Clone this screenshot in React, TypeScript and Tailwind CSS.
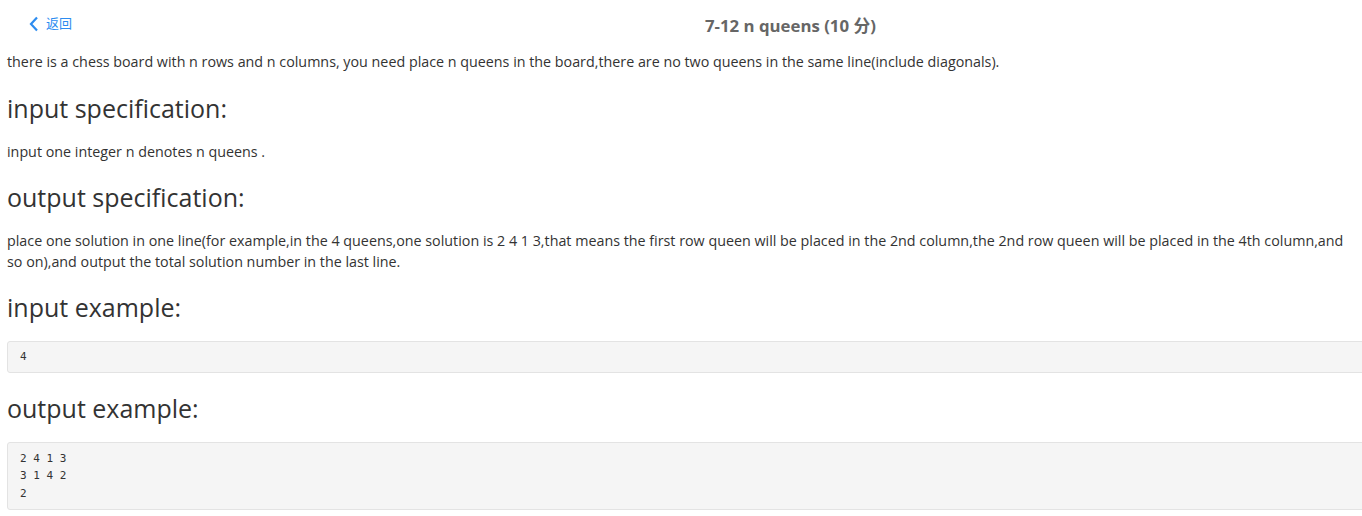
import React from 'react';

const App: React.FC = () => {
  const font = { fontFamily: '"Segoe UI", "Open Sans", "Noto Sans CJK SC", sans-serif' };
  const mono = { fontFamily: 'Consolas, "DejaVu Sans Mono", monospace' };
  return (
    <div className="w-[1362px] h-[516px] overflow-hidden bg-white text-[#333]" style={font}>
      <div className="flex items-center h-[48px] relative">
        <a className="flex items-center gap-[7px] ml-[29px] text-[#2d8cf0] text-[13px]">
          <svg width="10" height="16" viewBox="0 0 10 16" fill="none">
            <path d="M8 1.5L2 8l6 6.5" stroke="#2d8cf0" strokeWidth="2.2" />
          </svg>
          <span>返回</span>
        </a>
        <div className="absolute left-[705px] top-[13px] text-[16.8px] font-bold text-[#666]">7-12 n queens (10 分)</div>
      </div>
      <div className="w-[1580px] px-[7px]">
        <p className="text-[14.3px] leading-[20px] mt-[4px]">
          there is a chess board with n rows and n columns, you need place n queens in the board,there are no two queens in the same line(include diagonals).
        </p>
        <h3 className="text-[25px] leading-[34px] mt-[19px] mb-[17px]">input specification:</h3>
        <p className="text-[14.3px] leading-[20px]">input one integer n denotes n queens .</p>
        <h3 className="text-[25px] leading-[34px] mt-[18px] mb-[16px]">output specification:</h3>
        <p className="text-[14.3px] leading-[21px] w-[1352px]">
          place one solution in one line(for example,in the 4 queens,one solution is 2 4 1 3,that means the first row queen will be placed in the 2nd column,the 2nd row queen will be placed in the 4th column,and so on),and output the total solution number in the last line.
        </p>
        <h3 className="text-[25px] leading-[34px] mt-[18px] mb-[17px]">input example:</h3>
        <pre className="bg-[#f5f5f5] border border-[#e3e3e3] rounded-[3px] px-[12px] py-[6px] text-[11px] leading-[17.5px] text-[#333]" style={mono}>4</pre>
        <h3 className="text-[25px] leading-[34px] mt-[18px] mb-[17px]">output example:</h3>
        <pre className="bg-[#f5f5f5] border border-[#e3e3e3] rounded-[3px] px-[12px] py-[7px] text-[11px] leading-[17.5px] text-[#333]" style={mono}>{'2 4 1 3\n3 1 4 2\n2'}</pre>
      </div>
    </div>
  );
};

export default App;
